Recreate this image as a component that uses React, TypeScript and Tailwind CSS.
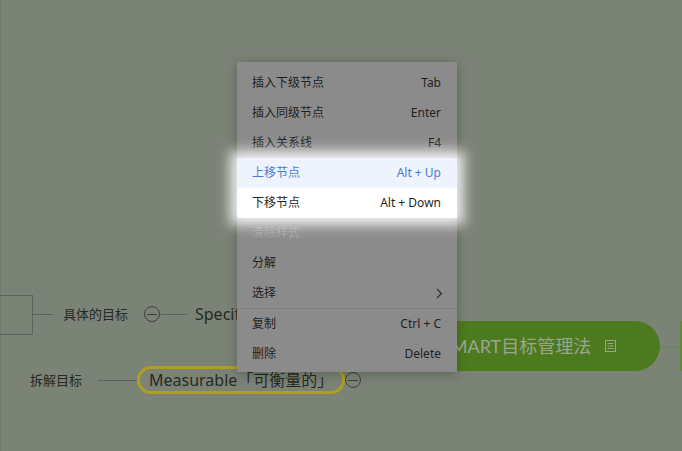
import React from "react";

const font = { fontFamily: '"Noto Sans", "Noto Sans CJK SC", sans-serif' };

function Row({
  label,
  shortcut,
  className = "",
  labelClass = "text-[#1f1f1f]",
  arrow = false,
}: {
  label: string;
  shortcut?: string;
  className?: string;
  labelClass?: string;
  arrow?: boolean;
}) {
  return (
    <div className={`flex h-[30px] items-center justify-between pl-[15px] pr-[16px] text-[12px] ${className}`}>
      <span className={labelClass}>{label}</span>
      {shortcut && <span className={labelClass}>{shortcut}</span>}
      {arrow && (
        <svg width="7" height="11" viewBox="0 0 7 11" className="mr-[-2px]">
          <path d="M1 1 L5.5 5.5 L1 10" fill="none" stroke="#2a2a2a" strokeWidth="1.1" />
        </svg>
      )}
    </div>
  );
}

function MinusCircle({ className }: { className: string }) {
  return (
    <div className={`absolute flex h-[16px] w-[16px] items-center justify-center rounded-full border border-[#3d4239] ${className}`}>
      <div className="h-px w-[10px] bg-[#3d4239]" />
    </div>
  );
}

export default function App() {
  return (
    <div className="relative h-[451px] w-[682px] overflow-hidden bg-[#7b8276]" style={font}>
      <div className="absolute left-0 top-0 h-full w-px bg-[#70776b]" />
      {/* bracket */}
      <div className="absolute left-0 top-[295px] h-[40px] w-[33px] border-y border-r border-[#5d6459]" />
      <div className="absolute left-[33px] top-[314px] h-px w-[20px] bg-[#5d6459]" />
      <div className="absolute left-[63px] top-[304px] text-[13px] leading-[20px] text-[#262a23]">具体的目标</div>
      <MinusCircle className="left-[144px] top-[306px]" />
      <div className="absolute left-[161px] top-[314px] h-px w-[26px] bg-[#5d6459]" />
      <div className="absolute left-[195px] top-[302px] w-[42px] overflow-hidden whitespace-nowrap text-[16px] leading-[24px] text-[#262a23]">Specific</div>

      <div className="absolute left-[30px] top-[370px] text-[13px] leading-[20px] text-[#262a23]">拆解目标</div>
      <div className="absolute left-[98px] top-[380px] h-px w-[40px] bg-[#5d6459]" />
      <div className="absolute left-[137px] top-[366px] flex h-[28px] w-[208px] items-center rounded-full border-[3px] border-[#ae9f1e] pl-[9px] text-[16px] text-[#262a23]">
        Measurable「可衡量的」
      </div>
      <MinusCircle className="left-[345px] top-[372px]" />

      {/* root node */}
      <div className="absolute left-[415px] top-[321px] flex h-[50px] w-[245px] items-center rounded-r-[25px] bg-[#4d7a1e] pl-[26px]">
        <span className="text-[18px] text-[#9aa590]" style={{ fontFamily: 'Lato, "Noto Sans CJK SC", sans-serif' }}>
          SMART目标管理法
        </span>
        <svg width="11" height="12" viewBox="0 0 11 12" className="ml-[14px]">
          <rect x="0.5" y="0.5" width="10" height="11" fill="none" stroke="#9aa590" />
          <path d="M2.5 3.5h6M2.5 6h6M2.5 8.5h6" stroke="#9aa590" />
        </svg>
      </div>
      <div className="absolute left-[660px] top-[346px] h-[2px] w-[20px] bg-[#6d8560]" />
      <div className="absolute left-[680px] top-[321px] h-[50px] w-[2px] bg-[#5f8a34]" />

      {/* context menu */}
      <div className="absolute left-[237px] top-[62px] w-[220px] bg-[#8b8b8b] pb-[3px] pt-[6px] shadow-[0_2px_10px_rgba(0,0,0,0.25)]">
        <Row label="插入下级节点" shortcut="Tab" />
        <Row label="插入同级节点" shortcut="Enter" />
        <Row label="插入关系线" shortcut="F4" />
        <div className="relative z-10 bg-white shadow-[0_0_12px_7px_rgba(255,255,255,0.88)]">
          <Row label="上移节点" shortcut="Alt + Up" className="bg-[#eef3fd]" labelClass="text-[#4a7bd6]" />
          <Row label="下移节点" shortcut="Alt + Down" className="bg-white" labelClass="text-[#1f1f1f]" />
        </div>
        <Row label="清除样式" labelClass="text-[#a3a3a3]" />
        <Row label="分解" />
        <Row label="选择" arrow />
        <div className="h-px bg-[#7f7f7f]" />
        <Row label="复制" shortcut="Ctrl + C" />
        <Row label="删除" shortcut="Delete" />
      </div>
    </div>
  );
}
